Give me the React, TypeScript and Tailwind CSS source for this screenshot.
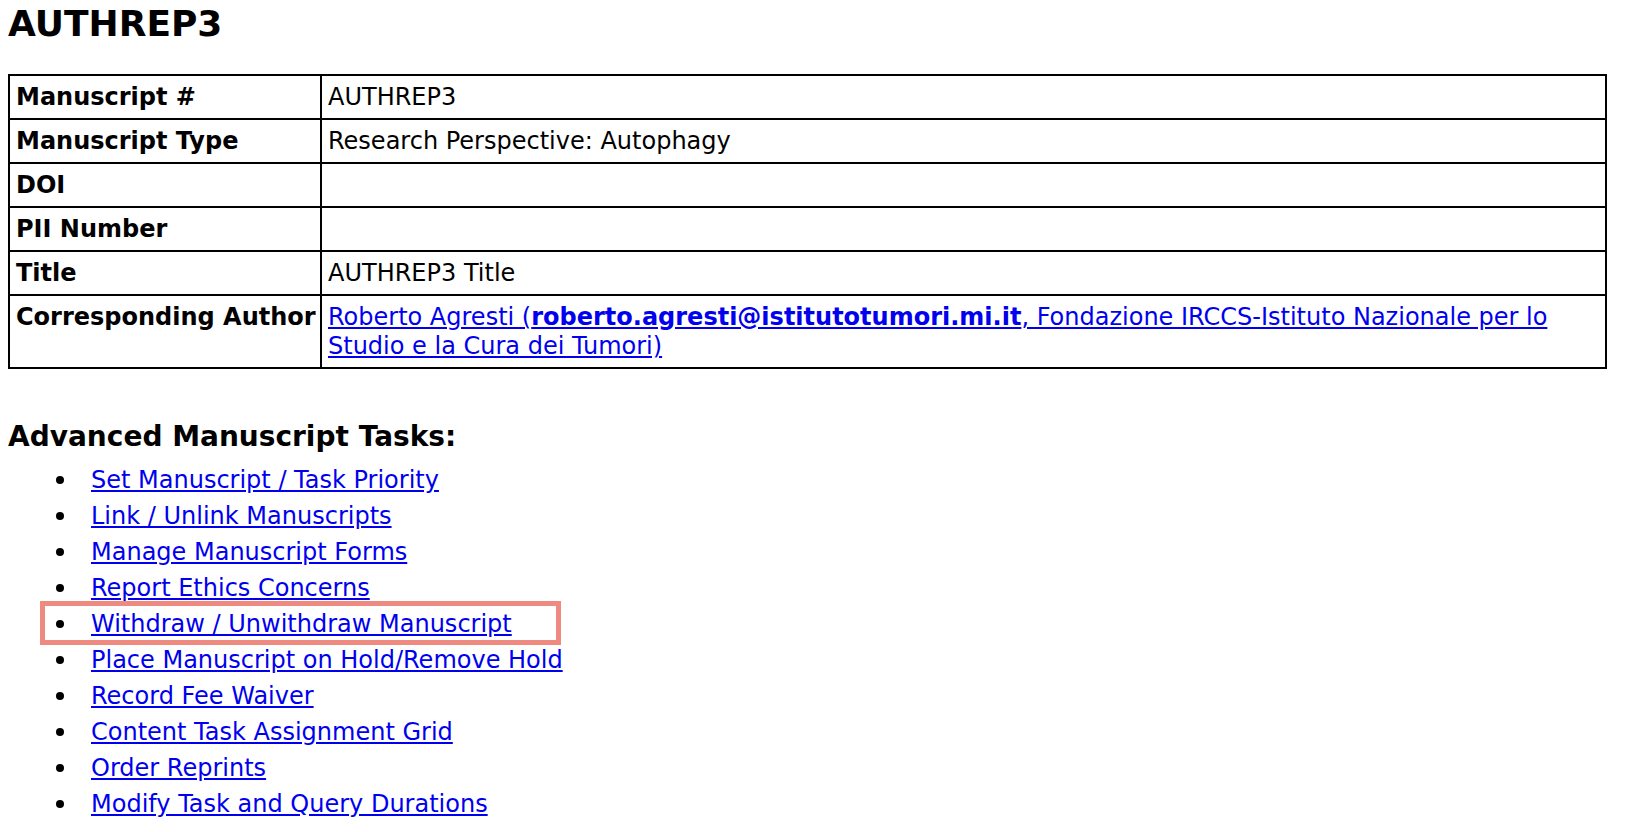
import React from 'react';

const rows: { label: string; value: React.ReactNode }[] = [
  { label: 'Manuscript #', value: 'AUTHREP3' },
  { label: 'Manuscript Type', value: 'Research Perspective: Autophagy' },
  { label: 'DOI', value: '' },
  { label: 'PII Number', value: '' },
  { label: 'Title', value: 'AUTHREP3 Title' },
  {
    label: 'Corresponding Author',
    value: (
      <a href="#" className="text-[#0000ee] underline">
        Roberto Agresti (<b>roberto.agresti@istitutotumori.mi.it</b>, Fondazione IRCCS-Istituto Nazionale per lo Studio e la Cura dei Tumori)
      </a>
    ),
  },
];

const tasks = [
  'Set Manuscript / Task Priority',
  'Link / Unlink Manuscripts',
  'Manage Manuscript Forms',
  'Report Ethics Concerns',
  'Withdraw / Unwithdraw Manuscript',
  'Place Manuscript on Hold/Remove Hold',
  'Record Fee Waiver',
  'Content Task Assignment Grid',
  'Order Reprints',
  'Modify Task and Query Durations',
];

export default function App() {
  return (
    <div className="min-h-[832px] bg-white px-[8px] pt-[2px] text-black font-['DejaVu_Sans',Verdana,sans-serif]">
      <h1 className="text-[36px] leading-[44px] font-bold">AUTHREP3</h1>

      {/* Manuscript details */}
      <div className="mt-[28px] grid w-[1599px] grid-cols-[312px_1fr] border-l-2 border-t-2 border-black text-[24px] leading-[29px]">
        {rows.map((r) => (
          <React.Fragment key={r.label}>
            <div className="border-b-2 border-r-2 border-black pl-[6px] pr-[4px] pt-[7px] pb-[6px] font-bold">
              {r.label}
            </div>
            <div className="min-h-[42px] border-b-2 border-r-2 border-black pl-[6px] pr-[6px] pt-[7px] pb-[6px]">
              {r.value}
            </div>
          </React.Fragment>
        ))}
      </div>

      {/* Tasks */}
      <h3 className="mt-[51px] text-[28px] leading-[34px] font-bold">Advanced Manuscript Tasks:</h3>
      <ul className="mt-[8px] text-[24px] leading-[36px]">
        {tasks.map((t, i) => (
          <li key={t} className="relative flex h-[36px] items-center pl-[48px]">
            <span className="h-[8px] w-[8px] shrink-0 rounded-full bg-black" />
            <a href="#" className="ml-[27px] text-[#0000ee] underline">
              {t}
            </a>
            {i === 4 && (
              <span className="absolute left-[32px] top-[-5px] h-[44px] w-[521px] border-[5px] border-[#ef8a80]" />
            )}
          </li>
        ))}
      </ul>
    </div>
  );
}
